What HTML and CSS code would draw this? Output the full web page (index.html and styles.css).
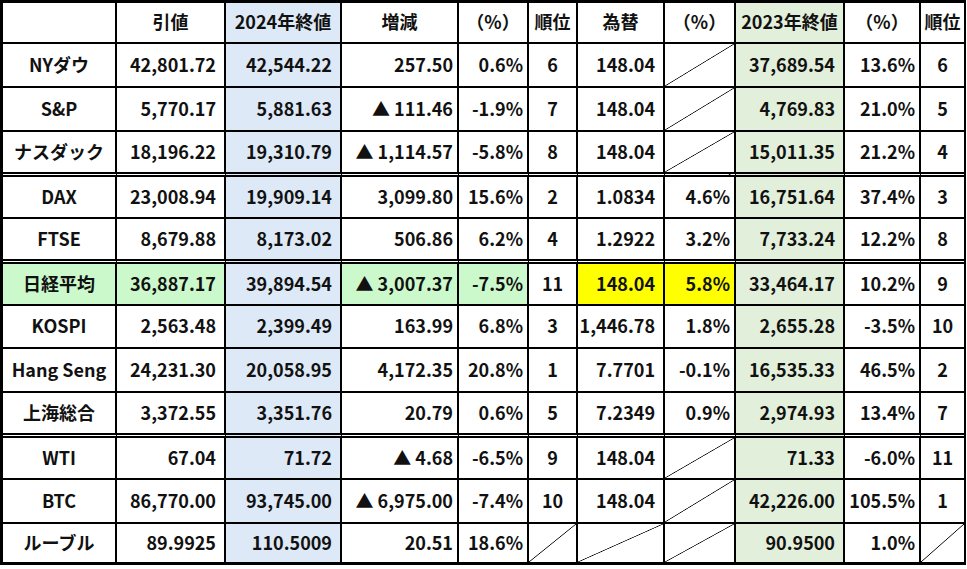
FILE: index.html
```html
<!DOCTYPE html>
<html lang="ja">
<head>
<meta charset="utf-8">
<title>指数比較</title>
<link rel="stylesheet" href="styles.css">
</head>
<body>
<table class="sheet">
  <thead>
    <tr>
      <th class="w-name"></th>
      <th class="w-num">引値</th>
      <th class="w-y24 c24">2024年終値</th>
      <th class="w-diff">増減</th>
      <th class="w-pct">（%）</th>
      <th class="w-rank">順位</th>
      <th class="w-fx">為替</th>
      <th class="w-fxp">（%）</th>
      <th class="w-num c23">2023年終値</th>
      <th class="w-pct2">（%）</th>
      <th class="w-rank2">順位</th>
    </tr>
  </thead>
  <tbody>
    <tr>
      <td class="name">NYダウ</td><td class="num">42,801.72</td><td class="num c24">42,544.22</td><td class="pct">257.50</td><td class="pct">0.6%</td><td class="rank">6</td><td class="num">148.04</td><td class="na"></td><td class="num c23">37,689.54</td><td class="pct">13.6%</td><td class="rank">6</td>
    </tr>
    <tr>
      <td class="name">S&amp;P</td><td class="num">5,770.17</td><td class="num c24">5,881.63</td><td class="pct">▲ 111.46</td><td class="pct">-1.9%</td><td class="rank">7</td><td class="num">148.04</td><td class="na"></td><td class="num c23">4,769.83</td><td class="pct">21.0%</td><td class="rank">5</td>
    </tr>
    <tr class="sep">
      <td class="name">ナスダック</td><td class="num">18,196.22</td><td class="num c24">19,310.79</td><td class="pct">▲ 1,114.57</td><td class="pct">-5.8%</td><td class="rank">8</td><td class="num">148.04</td><td class="na"></td><td class="num c23">15,011.35</td><td class="pct">21.2%</td><td class="rank">4</td>
    </tr>
    <tr>
      <td class="name">DAX</td><td class="num">23,008.94</td><td class="num c24">19,909.14</td><td class="pct">3,099.80</td><td class="pct">15.6%</td><td class="rank">2</td><td class="num">1.0834</td><td class="pct">4.6%</td><td class="num c23">16,751.64</td><td class="pct">37.4%</td><td class="rank">3</td>
    </tr>
    <tr class="sep">
      <td class="name">FTSE</td><td class="num">8,679.88</td><td class="num c24">8,173.02</td><td class="pct">506.86</td><td class="pct">6.2%</td><td class="rank">4</td><td class="num">1.2922</td><td class="pct">3.2%</td><td class="num c23">7,733.24</td><td class="pct">12.2%</td><td class="rank">8</td>
    </tr>
    <tr>
      <td class="name hl">日経平均</td><td class="num hl">36,887.17</td><td class="num c24">39,894.54</td><td class="pct hl">▲ 3,007.37</td><td class="pct hl">-7.5%</td><td class="rank">11</td><td class="num ye">148.04</td><td class="pct ye">5.8%</td><td class="num c23">33,464.17</td><td class="pct">10.2%</td><td class="rank">9</td>
    </tr>
    <tr>
      <td class="name">KOSPI</td><td class="num">2,563.48</td><td class="num c24">2,399.49</td><td class="pct">163.99</td><td class="pct">6.8%</td><td class="rank">3</td><td class="num">1,446.78</td><td class="pct">1.8%</td><td class="num c23">2,655.28</td><td class="pct">-3.5%</td><td class="rank">10</td>
    </tr>
    <tr>
      <td class="name">Hang Seng</td><td class="num">24,231.30</td><td class="num c24">20,058.95</td><td class="pct">4,172.35</td><td class="pct">20.8%</td><td class="rank">1</td><td class="num">7.7701</td><td class="pct">-0.1%</td><td class="num c23">16,535.33</td><td class="pct">46.5%</td><td class="rank">2</td>
    </tr>
    <tr class="sep">
      <td class="name">上海総合</td><td class="num">3,372.55</td><td class="num c24">3,351.76</td><td class="pct">20.79</td><td class="pct">0.6%</td><td class="rank">5</td><td class="num">7.2349</td><td class="pct">0.9%</td><td class="num c23">2,974.93</td><td class="pct">13.4%</td><td class="rank">7</td>
    </tr>
    <tr>
      <td class="name">WTI</td><td class="num">67.04</td><td class="num c24">71.72</td><td class="pct">▲ 4.68</td><td class="pct">-6.5%</td><td class="rank">9</td><td class="num">148.04</td><td class="na"></td><td class="num c23">71.33</td><td class="pct">-6.0%</td><td class="rank">11</td>
    </tr>
    <tr>
      <td class="name">BTC</td><td class="num">86,770.00</td><td class="num c24">93,745.00</td><td class="pct">▲ 6,975.00</td><td class="pct">-7.4%</td><td class="rank">10</td><td class="num">148.04</td><td class="na"></td><td class="num c23">42,226.00</td><td class="pct">105.5%</td><td class="rank">1</td>
    </tr>
    <tr>
      <td class="name">ルーブル</td><td class="num">89.9925</td><td class="num c24">110.5009</td><td class="pct">20.51</td><td class="pct">18.6%</td><td class="na"></td><td class="na"></td><td class="na"></td><td class="num c23">90.9500</td><td class="pct">1.0%</td><td class="na"></td>
    </tr>
  </tbody>
</table>
</body>
</html>
```
FILE: styles.css
```css
html, body {
  margin: 0;
  padding: 0;
  background: #fff;
}

.sheet {
  border-collapse: separate;
  border-spacing: 0;
  table-layout: fixed;
  width: 966px;
  border: 3px solid #000;
  border-right-width: 2px;
  font-family: "Noto Sans CJK JP", "Noto Sans", sans-serif;
  font-weight: 700;
  font-size: 18px;
  color: #111;
}

.sheet th,
.sheet td {
  box-sizing: border-box;
  padding: 0 0 3px 0;
  border-right: 2px solid #000;
  border-bottom: 2px solid #000;
  white-space: nowrap;
  overflow: hidden;
  vertical-align: middle;
  line-height: 1;
}

.sheet th:last-child,
.sheet td:last-child {
  border-right: none;
}

.sheet tbody tr:last-child td {
  border-bottom: none;
}

.sheet th {
  text-align: center;
  font-weight: 700;
}

/* column widths (border-box) */
.w-name { width: 114px; }
.w-num { width: 109px; }
.w-y24 { width: 116px; }
.w-diff { width: 117px; }
.w-pct { width: 70px; }
.w-rank { width: 49px; }
.w-fx { width: 87px; }
.w-fxp { width: 71px; }
.w-pct2 { width: 76px; }
.w-rank2 { width: 43px; }

/* row heights */
.sheet thead tr { height: 41px; }
.sheet tbody tr { height: 44px; }
.sheet tbody tr.sep { height: 45px; }
.sheet tbody tr:nth-child(4),
.sheet tbody tr:nth-child(6),
.sheet tbody tr:nth-child(10) { height: 42px; }
.sheet tbody tr:nth-child(7) { height: 43px; }
.sheet tbody tr:last-child { height: 38px; }

.sheet tr.sep td {
  border-bottom: 5px double #000;
}

/* cell kinds */
.name {
  text-align: center;
}

.num {
  text-align: right;
  padding-right: 8px !important;
}

.pct {
  text-align: right;
  padding-right: 4px !important;
}

.rank {
  text-align: center;
}

/* fills */
.c24 { background: #dde9f6; }
.c23 { background: #e2efda; }
.hl { background: #ccf9cc; }
.ye { background: #ffff00; }

.na {
  background: linear-gradient(to bottom right,
    transparent calc(50% - 0.7px),
    #000 50%,
    transparent calc(50% + 0.7px));
}
```
